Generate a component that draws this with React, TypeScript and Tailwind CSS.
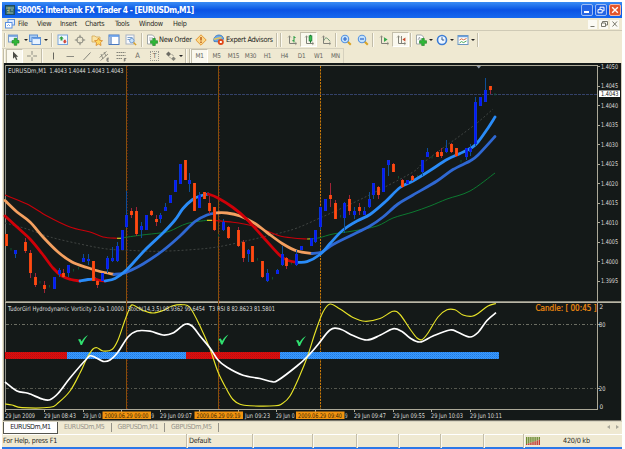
import React from "react";

type Pt = [number, number];

const FONT = "font-['DejaVu_Sans_Condensed','DejaVu_Sans',sans-serif]";
const CHART_FONT = "'DejaVu Sans Condensed','DejaVu Sans',sans-serif";

/* Catmull-Rom smoothing for the moving averages and oscillators */
function smooth(points: Pt[]): string {
  let d = `M${points[0][0]} ${points[0][1]}`;
  for (let i = 0; i < points.length - 1; i++) {
    const p0 = points[Math.max(0, i - 1)];
    const p1 = points[i];
    const p2 = points[i + 1];
    const p3 = points[Math.min(points.length - 1, i + 2)];
    d += `C${p1[0] + (p2[0] - p0[0]) / 6} ${p1[1] + (p2[1] - p0[1]) / 6} ${p2[0] - (p3[0] - p1[0]) / 6} ${p2[1] - (p3[1] - p1[1]) / 6} ${p2[0]} ${p2[1]}`;
  }
  return d;
}

type Series = { color: string; width: number; points: Pt[] };

const series: Series[] = [
  { color: "#c8000a", width: 1.1, points: [[5, 195], [27, 204], [47, 216], [70, 227], [90, 232], [103, 237], [117, 238.3]] },
  { color: "#f5f020", width: 1.1, points: [[117, 238.3], [121, 238.2]] },
  { color: "#0c7a30", width: 1, points: [[121, 238], [142, 235], [160, 233], [170, 231], [187, 223.5], [207, 220.3]] },
  { color: "#f5f020", width: 1.1, points: [[207, 220.3], [212, 220.3]] },
  { color: "#c8000a", width: 1.1, points: [[212, 220.3], [233, 222.3], [253, 226], [267, 231], [280, 236], [293, 238], [307, 239]] },
  { color: "#b0c020", width: 1.1, points: [[307, 239], [313, 238.8]] },
  { color: "#0c7a30", width: 1, points: [[313, 238.8], [320, 237.6], [333, 234], [353, 231], [377, 226], [393, 218], [413, 212], [430, 206], [447, 199], [470, 191], [495, 173]] },
  { color: "#f4a060", width: 2.8, points: [[5, 200.5], [17, 212], [30, 222], [43, 237], [58, 252], [72, 262], [87, 267.5], [100, 271.5], [114, 274.3]] },
  { color: "#2f68d2", width: 2.8, points: [[114, 274.3], [122, 273.7], [130, 270.7], [143, 264], [163, 250.5], [180, 236], [195, 221.5], [207, 215], [217, 212.8]] },
  { color: "#f4a060", width: 2.8, points: [[217, 212.8], [227, 213], [240, 216], [255, 223.5], [267, 232.5], [283, 244], [297, 251], [312, 253.5]] },
  { color: "#2f68d2", width: 2.8, points: [[312, 253.5], [322, 252], [333, 244.5], [350, 236], [370, 226], [383, 217], [398, 204], [413, 195], [437, 181], [453, 169.5], [470, 161], [478, 155], [495, 136.5]] },
  { color: "#d00008", width: 2.8, points: [[5, 216], [17, 227], [30, 239], [42, 253.5], [53, 268], [62, 276], [71, 279.5], [80, 281]] },
  { color: "#2a8cf8", width: 2.8, points: [[80, 281], [88, 279.5], [95, 279]] },
  { color: "#d00008", width: 2.8, points: [[95, 279], [100, 280.5], [105, 281]] },
  { color: "#2a8cf8", width: 2.8, points: [[105, 281], [115, 278.5], [127, 269.5], [145, 250], [163, 233], [175, 220], [183, 208.5], [192, 200], [200, 196], [208, 194]] },
  { color: "#d00008", width: 2.8, points: [[208, 194], [217, 197.5], [233, 207.5], [247, 219.5], [263, 237], [280, 255.5], [288, 260.5], [297, 262.3]] },
  { color: "#2a8cf8", width: 2.8, points: [[297, 262.3], [307, 261.7], [320, 254.5], [330, 243.5], [343, 230], [357, 221], [370, 214.5], [385, 202], [400, 187.5], [413, 181], [430, 170.5], [447, 159.5], [460, 153.5], [472, 147.5], [478, 142], [487, 129.5], [495, 117]] },
];

const trend: Pt[] = [[5, 223], [27, 229], [50, 237], [80, 244], [107, 249], [133, 250.5], [157, 251.3], [187, 250], [217, 247], [250, 240], [267, 236], [280, 233], [297, 228], [320, 218], [353, 203], [383, 188], [413, 172], [423, 163], [447, 145], [457, 138], [477, 123], [493, 109]];

const yellowLine: Pt[] = [[5, 404], [12, 405], [22, 407.6], [50, 407.3], [58, 403], [70, 391], [80, 373], [87, 358], [93, 349], [97, 347.7], [103, 351], [112, 349.5], [118, 340], [125, 320], [130, 307.5], [133, 305], [143, 310.5], [153, 313], [163, 310.5], [172, 306], [183, 304.7], [190, 307.5], [200, 326], [210, 349], [218, 372], [227, 390], [233, 399.5], [240, 404.3], [250, 405.8], [275, 405.8], [282, 403.7], [290, 396], [300, 375], [308, 355], [315, 333], [323, 312], [330, 304], [340, 309], [353, 317.5], [365, 321.3], [380, 318.5], [393, 311.3], [400, 314.5], [410, 329], [417, 338], [422, 339.7], [428, 333], [438, 317], [447, 309.8], [455, 309.8], [463, 315], [472, 316.3], [478, 313.5], [488, 306], [496, 303.5]];

const whiteLine: Pt[] = [[5, 382], [17, 391], [28, 393.3], [43, 399.3], [50, 399.7], [58, 393.5], [70, 378], [87, 358.5], [92, 356], [103, 361.3], [110, 360], [118, 352], [128, 337], [137, 331], [150, 331.2], [163, 335], [173, 333], [185, 324.3], [192, 326], [200, 336], [210, 348], [218, 360], [227, 367.3], [243, 375.3], [260, 378.5], [272, 381.7], [278, 380.3], [297, 366], [308, 356], [318, 344.5], [330, 330], [340, 329], [353, 335.5], [367, 340], [380, 335.3], [393, 328.8], [402, 331.5], [410, 338], [420, 342], [433, 336], [450, 330], [458, 332.3], [470, 337], [478, 332.5], [487, 320.5], [496, 312.7]];

/* x, body top, body bottom, wick top, wick bottom */
type Candle = [number, number, number, number, number];

const bull: Candle[] = [
  [15.3, 250, 253.5, 250, 258], [54.5, 277, 289, 277, 289], [59, 270, 274, 268, 277], [68.5, 265, 273, 265, 277], [83.5, 258, 262, 254, 262], [88.5, 259, 261, 254, 265], [102.5, 273, 281, 273, 281], [107.5, 258, 269, 256, 273], [112.5, 258, 261, 247, 262], [117, 246, 261, 242, 262], [122, 230, 250, 230, 250], [126.7, 215, 227, 191, 228], [141.5, 226, 230, 222, 238], [146.5, 215, 230, 215, 230], [160.7, 215, 218.5, 213, 223], [165.5, 207, 211, 203, 211], [170.3, 195, 203, 195, 203], [175.3, 180, 192, 180, 192], [180.3, 164, 184, 164, 184], [189.6, 180, 184, 173, 192], [199.4, 195, 208, 192, 208], [223.7, 222, 230, 219, 231], [248, 250, 254, 249, 262], [267.4, 273, 281, 269, 282], [277, 270, 273.5, 269, 274], [282, 254, 265, 246, 266], [296.4, 254, 265, 250, 266], [301.4, 246, 250, 246, 250], [311, 238, 246, 238, 246], [315.7, 230, 242, 230, 243], [320.4, 207, 227, 207, 230], [325.4, 199, 211, 199, 211], [344.8, 203, 218, 202, 233], [354.4, 211, 215, 207, 219], [364.4, 211, 215, 207, 215], [369, 199, 207, 192, 208], [373.8, 183, 195, 183, 199], [383.5, 168, 192, 168, 192], [388.4, 160, 164.5, 160, 176], [407.7, 180, 184, 180, 184], [422.4, 160, 172, 160, 176], [427.4, 152, 157, 148, 157], [446.6, 148, 152, 140, 153], [466, 148, 157, 148, 160], [470.6, 148, 152, 144, 156], [475.4, 102, 144, 97, 146], [480.3, 97, 106, 97, 106], [485.4, 90, 102, 78, 102],
];

const bear: Candle[] = [
  [6, 234, 246, 234, 246], [25, 242, 251, 238, 253], [30, 253, 273, 250, 278], [35, 277, 285, 273, 287], [44.5, 285, 289, 281, 293], [63.5, 273, 277, 269, 278], [93, 261, 281, 261, 281], [97.5, 281, 285, 280, 288], [131.5, 211, 215, 208, 218], [136.5, 211, 234, 207, 236], [151.3, 211, 215, 210, 216], [156, 219, 222, 215, 226], [185, 160, 180, 160, 180], [194.6, 183, 211, 183, 211], [204.4, 192, 199, 192, 199], [209.3, 203, 211, 196, 214], [214, 207, 230, 207, 231], [228.7, 227, 238, 226, 239], [238.3, 230, 246, 227, 247], [243.3, 242, 258, 240, 262], [252.7, 246, 262, 246, 262], [262.5, 261, 277, 261, 278], [286.5, 258, 266, 257, 269], [330.4, 195, 199, 183, 207], [335.4, 203, 219, 200, 219], [349.5, 199, 211, 195, 215], [359.3, 207, 211, 203, 215], [378.7, 187, 195, 186, 199], [393.4, 164, 172, 163, 172], [402.7, 180, 187, 179, 188], [412.4, 176, 180, 175, 181], [437, 152, 157, 151, 157], [441.6, 152, 156, 148, 158], [451.4, 144, 152, 143, 153], [456.4, 148, 156, 148, 157], [490.4, 86, 90, 86, 94],
];

const dojis: Pt[] = [[11, 248], [40, 281], [49.5, 285], [73.5, 269], [78.5, 267], [218.5, 234], [257.5, 258], [272.5, 277], [291.5, 262], [340.5, 215], [398.5, 176], [417.5, 175], [432, 156], [461, 160], [495, 93]];

function Txt(p: { x: number; y: number; w?: number; fill?: string; size?: number; children: string }) {
  return (
    <text x={p.x} y={p.y} textLength={p.w} lengthAdjust="spacingAndGlyphs" fontSize={p.size ?? 6.4} fill={p.fill ?? "#dcdcd8"} fontFamily={CHART_FONT} className="whitespace-pre">
      {p.children}
    </text>
  );
}

function Candles({ data, body, wick, edge }: { data: Candle[]; body: string; wick: string; edge: string }) {
  return (
    <g>
      {data.map(([x, t, b, wt, wb]) => {
        const l = Math.round(x - 1.5);
        return (
          <g key={x} shapeRendering="crispEdges">
            <rect x={l + 1} y={wt} width={1} height={wb - wt} fill={wick} />
            <rect x={l} y={t} width={3} height={b - t} fill={edge} />
            <rect x={l + 1} y={t} width={1} height={b - t} fill={body} />
          </g>
        );
      })}
    </g>
  );
}

function Chart() {
  const prices = ["1.4050", "1.4045", "1.4040", "1.4035", "1.4030", "1.4025", "1.4020", "1.4015", "1.4010", "1.4005", "1.4000", "1.3995"];
  const ticks = [5, 44, 83, 121, 160, 199, 238, 276, 315, 354, 393, 431, 470];
  /* x, width, text; labels covered by a separator flag show only their free part */
  const times: [number, number, string][] = [[5, 30, "29 Jun 2009"], [44, 32, "29 Jun 08:43"], [83, 18, "29 Jun 0"], [151.5, 2.5, "9"], [160, 32, "29 Jun 09:07"], [245, 25, "Jun 09:23"], [276, 18.5, "29 Jun 0"], [345, 2.5, "9"], [354, 32, "29 Jun 09:47"], [393, 32, "29 Jun 09:55"], [431, 32, "29 Jun 10:03"], [470, 32, "29 Jun 10:11"]];
  const flags: [number, string][] = [[102.5, "2009.06.29 09:00"], [194.5, "2009.06.29 09:19"], [296, "2009.06.29 09:40"]];
  return (
    <svg className="block h-[359px] w-[619px] bg-[#141918]" viewBox="3 63 619 359">
      <defs>
        <pattern id="hatchRed" width="2" height="2" patternUnits="userSpaceOnUse">
          <rect width="2" height="2" fill="#e40a0a" />
          <rect width="1" height="1" fill="#b01414" />
          <rect x="1" y="1" width="1" height="1" fill="#c81010" />
        </pattern>
        <pattern id="hatchBlue" width="2" height="2" patternUnits="userSpaceOnUse">
          <rect width="2" height="2" fill="#3c9cff" />
          <rect width="1" height="1" fill="#2078e0" />
          <rect x="1" y="1" width="1" height="1" fill="#2c88f0" />
        </pattern>
      </defs>
      {/* frames */}
      <g shapeRendering="crispEdges">
        <rect x="3" y="63" width="1" height="359" fill="#b8b4a4" />
        <rect x="5" y="65" width="593" height="1" fill="#aca998" />
        <rect x="5" y="65" width="1" height="345" fill="#8f9088" />
        <rect x="597" y="65" width="1" height="345" fill="#aca998" />
        <rect x="5" y="301" width="617" height="1" fill="#8a897c" />
        <rect x="5" y="302" width="617" height="1" fill="#b9b6a6" />
        <rect x="5" y="409" width="593" height="1" fill="#aca998" />
        <rect x="3" y="420" width="619" height="1" fill="#77756a" />
        <rect x="3" y="421" width="619" height="1" fill="#d9d5c2" />
        <rect x="621" y="63" width="1" height="359" fill="#d0ccba" />
        {prices.map((p, i) => (
          <rect key={p} x="598" y={Math.round(66 + i * 19.5)} width="2" height="1" fill="#aca998" />
        ))}
        {ticks.map((x) => (
          <rect key={x} x={x} y="410" width="1" height="2" fill="#aca998" />
        ))}
        <rect x="598" y="324" width="2" height="1" fill="#aca998" />
        <rect x="598" y="388" width="2" height="1" fill="#aca998" />
      </g>
      {/* bid line and period separators */}
      <line x1="6" x2="597" y1="94.5" y2="94.5" stroke="#34426a" strokeDasharray="3 1" />
      <line x1="6" x2="597" y1="324.5" y2="324.5" stroke="#76786c" strokeDasharray="3 2 1 2" strokeWidth="0.9" />
      <line x1="6" x2="597" y1="388.5" y2="388.5" stroke="#5e6056" strokeDasharray="3 2 1 2" strokeWidth="0.9" />
      {[126.5, 218.5].map((x) => (
        <g key={x}>
          <line x1={x} x2={x} y1="66" y2="409" stroke="#84500c" />
          <line x1={x + 1} x2={x + 1} y1="66" y2="409" stroke="#7a1a10" strokeDasharray="1 2" strokeWidth="0.8" />
        </g>
      ))}
      <line x1="320.5" x2="320.5" y1="66" y2="409" stroke="#c87808" strokeDasharray="2.2 1" />
      <path d={smooth(trend)} fill="none" stroke="#444846" strokeWidth="0.9" strokeDasharray="2 2" />
      <path d="M476.5 66h4.5l-2.2 2.6z" fill="#8d99a8" />
      {dojis.map(([x, y]) => (
        <rect key={x} x={x - 0.5} y={y} width="1" height="2.5" fill="#0c5030" />
      ))}
      {series.filter((s) => s.width < 2).map((s, i) => (
        <path key={i} d={smooth(s.points)} fill="none" stroke={s.color} strokeWidth={s.width} />
      ))}
      {series.filter((s) => s.width > 2).map((s, i) => (
        <path key={i} d={smooth(s.points)} fill="none" stroke={s.color} strokeWidth={s.width} strokeLinecap="round" />
      ))}
      <Candles data={bull} body="#0810ff" wick="#0d4f98" edge="#0a34d8" />
      <Candles data={bear} body="#ff4c10" wick="#a02438" edge="#f04412" />
      <Txt x={8} y={73} w={38.5}>EURUSDm,M1</Txt>
      <Txt x={49.5} y={73} w={74}>1.4043 1.4044 1.4043 1.4043</Txt>

      {/* indicator pane */}
      <g shapeRendering="crispEdges">
        <rect x="5" y="352" width="62" height="7" fill="url(#hatchRed)" />
        <rect x="67" y="352" width="119" height="7" fill="url(#hatchBlue)" />
        <rect x="186" y="352" width="94" height="7" fill="url(#hatchRed)" />
        <rect x="280" y="352" width="219" height="7" fill="url(#hatchBlue)" />
      </g>
      <path d={smooth(yellowLine)} fill="none" stroke="#e8e428" strokeWidth="1.15" />
      <path d={smooth(whiteLine)} fill="none" stroke="#ffffff" strokeWidth="1.7" />
      <Txt x={8} y={311} w={116}>TudorGirl Hydrodynamic Vorticity 2.0a 1.0000</Txt>
      <Txt x={128} y={311} w={77}>Stoch(14,3,5) 98.9362 99.6454</Txt>
      <Txt x={209} y={311} w={66}>T3 RSI 8 82.8623 81.5801</Txt>
      {[[78, 335], [218.5, 334.5], [296, 336]].map(([x, y]) => (
        <path key={x} transform={`translate(${x} ${y})`} d="M0 4.6L2.3 4 3.6 6.6C5.2 3.8 7.2 1.6 10 0 7.6 2.8 5.6 6 4 10H2.6C2 8 1.2 6.2 0 4.6z" fill="#30e070" />
      ))}
      <text x="535.5" y="311" fontSize="8" textLength="61" lengthAdjust="spacingAndGlyphs" fill="#f08c10" fontFamily={CHART_FONT} stroke="#f08c10" strokeWidth="0.2">
        Candle: [ 00:45 ]
      </text>
      <Txt x={599.5} y={309}>2</Txt>
      <Txt x={599} y={326.5} w={6.5}>80</Txt>
      <Txt x={599} y={390.5} w={6.5}>20</Txt>
      <Txt x={599.5} y={408.5}>0</Txt>

      {/* price scale */}
      {prices.map((p, i) => (
        <Txt key={p} x={601} y={68.6 + i * 19.5} w={17}>{p}</Txt>
      ))}
      <rect x="599" y="90.5" width="21" height="6.5" fill="#ffffff" />
      <Txt x={601} y={96} w={17.5} fill="#202020">1.4043</Txt>

      {/* time scale */}
      {times.map(([x, w, t]) => (
        <Txt key={x} x={x} y={417.6} w={w}>{t}</Txt>
      ))}
      {flags.map(([x, t]) => (
        <g key={t}>
          <rect x={x} y="411.5" width="48.5" height="7.5" fill="#f29410" />
          <Txt x={x + 2} y={417.6} w={44} fill="#3a2804">{t}</Txt>
        </g>
      ))}
    </svg>
  );
}

function Svg({ children, w = 12, h = 12 }: { children: React.ReactNode; w?: number; h?: number }) {
  return (
    <svg width={w} height={h} viewBox={`0 0 ${w} ${h}`} className="block shrink-0" fill="none">
      {children}
    </svg>
  );
}

const Plus = ({ x = 0, y = 0 }: { x?: number; y?: number }) => (
  <path transform={`translate(${x} ${y})`} d="M2.2 0h2.6v2.2H7v2.6H4.8V7H2.2V4.8H0V2.2h2.2z" fill="#30b838" stroke="#188020" strokeWidth=".6" />
);
const Caret = () => <span className="ml-[2px] border-x-[2px] border-t-[2px] border-x-transparent border-t-[#222]" />;
const Cell = ({ children, on }: { children: React.ReactNode; on?: boolean }) => (
  <div className={`flex h-[15px] w-[17px] shrink-0 items-center justify-center ${on ? "border border-[#c4bfab] border-r-white border-b-white bg-[#faf8ee]" : ""}`}>{children}</div>
);
const DropCell = ({ children }: { children: React.ReactNode }) => (
  <div className="flex w-[21px] shrink-0 items-center justify-center">{children}</div>
);
const Sep = ({ className }: { className: string }) => (
  <div className={`flex h-[14px] shrink-0 justify-center ${className}`}>
    <div className="w-px bg-[#c2bda9]" />
    <div className="w-px bg-[#fbf9f0]" />
  </div>
);

/* price and time axes shared by the chart-type icons */
const Axes = ({ children }: { children: React.ReactNode }) => (
  <Svg>
    <path d="M3.5 2v7.5h7" stroke="#808078" strokeWidth="1" />
    <path d="M2 3.6L3.5 1.6 5 3.6M9 8l2 1.5L9 11" stroke="#98968a" strokeWidth=".7" />
    {children}
  </Svg>
);

const Magnifier = ({ minus }: { minus?: boolean }) => (
  <Svg>
    <path d="M7.5 7.5l3.3 3.3" stroke="#dba425" strokeWidth="2" />
    <circle cx="5" cy="5" r="3.7" fill="#c4e2fc" stroke="#5894e0" strokeWidth="1.1" />
    <path d={minus ? "M3 5h4" : "M3 5h4M5 3v4"} stroke="#2c66c8" strokeWidth="1.2" />
  </Svg>
);

function TitleBar() {
  return (
    <div className="flex h-4 items-center bg-gradient-to-b from-[#3a8cf4] via-[#0a52e4] to-[#1668ee] pr-px pl-[3px]">
      <Svg w={10} h={10}>
        <rect x=".5" y=".5" width="9" height="9" fill="#386c70" stroke="#1c4a60" />
        <path d="M1 3h8M2 5.5h2M6 5h2M2 8h6" stroke="#8cb8b0" />
        <path d="M4 2v6" stroke="#d8b050" strokeWidth=".8" />
      </Svg>
      <span className="ml-[2px] text-[8.4px] leading-none font-bold tracking-[-0.5px] whitespace-pre text-white">58005: Interbank FX Trader 4 - [EURUSDm,M1]</span>
      <div className="ml-auto flex gap-[2px]">
        <div className="flex h-3 w-3 items-end rounded-[2px] border border-[#9cbcf4] bg-[#2464e4] pb-[2px] pl-[2px]">
          <div className="h-[2px] w-[5px] bg-white" />
        </div>
        <div className="flex h-3 w-3 items-center justify-center rounded-[2px] border border-[#9cbcf4] bg-[#2464e4]">
          <Svg w={8} h={8}>
            <path d="M3 3V1.2h4v3.6H5.5M1 3.6h4.2v3.2H1z" stroke="#fff" />
          </Svg>
        </div>
        <div className="flex h-3 w-3 items-center justify-center rounded-[2px] border border-[#f4b8a4] bg-[#e4552c]">
          <Svg w={8} h={8}>
            <path d="M1.2 1.2l5.6 5.6M6.8 1.2L1.2 6.8" stroke="#fff" strokeWidth="1.4" />
          </Svg>
        </div>
      </div>
    </div>
  );
}

function MenuBar() {
  return (
    <div className="flex h-3 items-center pr-[3px] pl-[3px] text-[7.2px] leading-none tracking-[-0.3px] text-[#2a2a26]">
      <Svg w={10} h={10}>
        <rect x="3" y=".5" width="6.5" height="5.5" fill="#dceaff" stroke="#5a90e0" />
        <rect x=".5" y="3.5" width="6.5" height="5.5" fill="#fff" stroke="#5a90e0" />
        <path d="M2 7l1.5-1.5L5 7" stroke="#5a90e0" strokeWidth=".8" />
      </Svg>
      <span className="ml-[3px] w-[19px]">File</span>
      <span className="w-[23px]">View</span>
      <span className="w-[25px]">Insert</span>
      <span className="w-[30px]">Charts</span>
      <span className="w-[24px]">Tools</span>
      <span className="w-[34px]">Window</span>
      <span>Help</span>
      <div className="ml-auto flex gap-[2px]">
        {["M1.5 6.5h4", "M2.5 3V1.5h5v3.5H6M1.5 3h4v3.5h-4z", "M1.5 1.5l4.5 5M6 1.5l-4.5 5"].map((d) => (
          <div key={d} className="flex h-[9px] w-[9px] items-center justify-center bg-[#fbfaf4]">
            <Svg w={8} h={8}>
              <path d={d} stroke="#77776c" strokeWidth="1" />
            </Svg>
          </div>
        ))}
      </div>
    </div>
  );
}

function MainToolbar() {
  return (
    <div className="flex h-[18px] items-center border-t border-[#cfcab6] text-[7.4px] leading-none tracking-[-0.32px] text-[#1e1e1c]">
      <Sep className="w-[5px]" />
      <DropCell>
        <Svg w={14}>
          <rect x=".5" y="1" width="9" height="7" fill="#e6f2ff" stroke="#7a9cc8" />
          <path d="M1 2h8" stroke="#5a90d8" strokeWidth="1.4" />
          <Plus x={4} y={4.3} />
        </Svg>
        <Caret />
      </DropCell>
      <DropCell>
        <Svg w={13}>
          <rect x=".5" y="1" width="8" height="6.5" fill="#a8ccf4" stroke="#5c90d4" />
          <rect x="3" y="3.5" width="8.5" height="7" fill="#e8f3ff" stroke="#5c90d4" />
          <path d="M3.5 4.5h8" stroke="#6ca0e8" strokeWidth="1.2" />
        </Svg>
        <Caret />
      </DropCell>
      <Sep className="w-[5px]" />
      <Cell>
        <Svg>
          <rect x="1" y="1" width="9.5" height="9.5" fill="#f2f8ff" stroke="#78a4dc" />
          <path d="M4.4 2.2l2.4 2.4H5.5v2h-2v-2H2z" fill="#30a040" />
          <path d="M7.8 9.6L5.6 7.4h1.2V5.8h2v1.6H10z" fill="#d04838" />
        </Svg>
      </Cell>
      <Cell>
        <Svg>
          <circle cx="6" cy="6" r="3.2" stroke="#88887e" strokeWidth="1" />
          <path d="M6 .8v3.4M6 7.8v3.4M.8 6h3.4M7.8 6h3.4" stroke="#88887e" strokeWidth="1" />
        </Svg>
      </Cell>
      <Cell>
        <Svg>
          <path d="M1 2h3l1 1h4v5H1z" fill="#fae4a4" stroke="#d0a048" strokeWidth=".7" />
          <path d="M7.5 4l1.2 2.4 2.8.3-2 1.9.5 2.9-2.5-1.4-2.5 1.4.5-2.9-2-1.9 2.8-.3z" fill="#ffd860" stroke="#d88828" strokeWidth=".8" />
        </Svg>
      </Cell>
      <Cell>
        <Svg>
          <rect x="1" y="1" width="10" height="9.5" fill="#fff" stroke="#4878c0" />
          <path d="M1 2h10" stroke="#5c98e8" strokeWidth="1.6" />
          <path d="M3 3v7" stroke="#4878c0" strokeWidth="1.2" />
        </Svg>
      </Cell>
      <Cell>
        <Svg>
          <rect x="1" y="1" width="8" height="9" fill="#f6f8fc" stroke="#a8b4c4" />
          <path d="M2.5 3.5h5M2.5 5.5h3" stroke="#7ba0c8" />
          <circle cx="6.8" cy="6.6" r="2.2" fill="#c8e2fa" stroke="#6c98d0" strokeWidth=".9" />
          <path d="M8.5 8.4l2.6 2.6" stroke="#d8a028" strokeWidth="1.4" />
        </Svg>
      </Cell>
      <Sep className="w-[6px]" />
      <div className="flex w-[47px] shrink-0 items-center gap-[1px] pl-[1px]">
        <Svg>
          <path d="M1.5 1h5l2 2v7h-7z" fill="#fff" stroke="#8c9498" strokeWidth=".8" />
          <path d="M3 4h4M3 6h3" stroke="#8c9498" strokeWidth=".7" />
          <Plus x={4.5} y={4.5} />
        </Svg>
        <span className="whitespace-nowrap">New Order</span>
      </div>
      <div className="flex w-[18px] shrink-0 items-center justify-center">
        <Svg>
          <path d="M6 .8L11.2 6 6 11.2.8 6z" fill="#fbd88c" stroke="#e49a38" />
          <path d="M6 3v3.4M6 7.6v1.4" stroke="#b85810" strokeWidth="1.4" />
        </Svg>
      </div>
      <div className="flex w-[65px] shrink-0 items-center gap-[1px] pl-[3px]">
        <Svg>
          <path d="M1 7.5C0 3.5 3 1 6 1s4.5 2 4.6 4.2L6.5 8z" fill="#6ca8e8" stroke="#3a74b8" strokeWidth=".8" />
          <path d="M1 5.2l7.5-1.6" stroke="#e8c858" strokeWidth="1.5" />
          <circle cx="7.8" cy="8" r="3" fill="#e04818" />
          <rect x="6.8" y="7" width="2" height="2" fill="#fff" />
        </Svg>
        <span className="tracking-[-0.36px] whitespace-nowrap">Expert Advisors</span>
      </div>
      <Sep className="w-[4px]" />
      <Sep className="w-[4px]" />
      <Cell>
        <Axes>
          <path d="M8 2v6.4M6.4 6.6H8M8 3.5h1.6" stroke="#38a04c" strokeWidth="1.1" />
        </Axes>
      </Cell>
      <Cell on>
        <Axes>
          <path d="M7.5 .8v8" stroke="#187030" />
          <rect x="6.1" y="1.8" width="2.8" height="5.2" fill="#38c050" stroke="#187030" strokeWidth=".7" />
        </Axes>
      </Cell>
      <Cell>
        <Axes>
          <path d="M4 6.5c1.6-4 3-3 6 .8" stroke="#6b9872" strokeWidth="1" />
        </Axes>
      </Cell>
      <Sep className="w-[3px]" />
      <Cell><Magnifier /></Cell>
      <Cell><Magnifier minus /></Cell>
      <Sep className="w-[4px]" />
      <Cell>
        <Axes>
          <path d="M6 3.2l3.6 2.4L6 8z" fill="#38a84c" />
        </Axes>
      </Cell>
      <Cell on>
        <Axes>
          <path d="M6.5 2v7" stroke="#88887e" />
          <path d="M10.4 3.4L7.4 5.5l3 2.1z" fill="#c84828" />
        </Axes>
      </Cell>
      <Sep className="w-[4px]" />
      <DropCell>
        <Svg>
          <path d="M1.5 1h5l2 2v7h-7z" fill="#fff" stroke="#8c9498" strokeWidth=".8" />
          <path d="M3 6l1.5-3 1 4" stroke="#8c9498" strokeWidth=".7" />
          <Plus x={4.5} y={4.5} />
        </Svg>
        <Caret />
      </DropCell>
      <DropCell>
        <Svg>
          <circle cx="6" cy="6" r="4.5" fill="#eef6ff" stroke="#3c7cd4" strokeWidth="1.6" />
          <path d="M6 3.2V6h2.2" stroke="#30588c" />
        </Svg>
        <Caret />
      </DropCell>
      <DropCell>
        <Svg>
          <rect x="1" y="1.5" width="10" height="9" fill="#fff" stroke="#6a94c0" />
          <path d="M1 2.5h10" stroke="#6ca0dc" strokeWidth="1.5" />
          <path d="M2.5 6l2-1.2 2 1 3-1.3" stroke="#d06030" strokeWidth=".9" />
          <path d="M2.5 9l2-1.4 2 1 3-1.6" stroke="#38a048" strokeWidth=".9" />
        </Svg>
        <Caret />
      </DropCell>
      <Sep className="w-[3px]" />
    </div>
  );
}

function DrawingToolbar() {
  return (
    <div className="flex h-[15px] items-center">
      <div className="flex h-[15px] w-[342px] items-center border-t border-r border-[#d6d1be] text-[6.4px] leading-none tracking-[-0.2px] text-[#66665e]">
        <Sep className="w-[4px]" />
        <Cell on>
          <Svg>
            <path d="M4 1.5v7.2l1.8-1.6 1.3 3 1.3-.6-1.3-2.8h2.2z" fill="#4c4c46" />
          </Svg>
        </Cell>
        <Cell>
          <Svg>
            <path d="M6 1v3.8M6 7.2V11M1 6h3.8M7.2 6H11" stroke="#8c8c82" />
          </Svg>
        </Cell>
        <Sep className="w-[4px]" />
        <Cell><Svg><path d="M6.5 2.5v7" stroke="#66665e" /></Svg></Cell>
        <Cell><Svg><path d="M2.5 6.5h7.5" stroke="#8c8c82" /></Svg></Cell>
        <Cell><Svg><path d="M2.5 10l7-7.5" stroke="#84847a" /></Svg></Cell>
        <Cell>
          <Svg>
            <path d="M1.5 7.5l7-6M2.5 10.5l7.5-6.5M3 4l2 5M6 2l2 4" stroke="#7c7c72" strokeWidth=".8" />
            <path d="M11 8.2H9v3h2M9 9.7h1.6" stroke="#555" strokeWidth=".7" />
          </Svg>
        </Cell>
        <Cell>
          <Svg>
            <path d="M1.5 2.5h9M1.5 5.5h9M1.5 8.5h6" stroke="#84847a" strokeDasharray="1.5 .5" />
            <path d="M9.3 11.5v-3h2M9.3 10h1.6" stroke="#555" strokeWidth=".7" />
          </Svg>
        </Cell>
        <Cell><span className="text-[7.5px]">A</span></Cell>
        <Cell>
          <div className="flex h-[10px] w-[9px] items-center justify-center border border-dotted border-[#9a9a90] text-[7px]">T</div>
        </Cell>
        <DropCell>
          <Svg>
            <path d="M3.5 1.5L6 4 3.5 6.5 1 4z" fill="#6c6c64" />
            <path d="M4 6.5l2 2M6.5 4l2 2" stroke="#84847a" strokeWidth=".8" />
            <path d="M8.5 6.4L10.8 8.7 8.5 11 6.2 8.7z" fill="#84847a" />
          </Svg>
          <Caret />
        </DropCell>
        <Sep className="w-[4px]" />
        <Sep className="w-[3px]" />
        <Cell on>M1</Cell>
        {["M5", "M15", "M30", "H1", "H4", "D1", "W1", "MN"].map((t) => (
          <Cell key={t}>{t}</Cell>
        ))}
      </div>
    </div>
  );
}

function Tabs() {
  return (
    <div className="flex h-[13px] items-start border-b border-white text-[7px] leading-none tracking-[-0.34px] text-[#96948a]">
      <div className="flex h-[12px] w-[55px] items-center justify-center border-r border-b border-l border-[#55554e] bg-white text-[#22221f]">EURUSDm,M1</div>
      {["EURUSDm,M5", "GBPUSDm,M1", "GBPUSDm,M5"].map((t) => (
        <div key={t} className="mt-[1px] flex h-[9px] w-[53.5px] items-center justify-center border-r border-[#96948a]">{t}</div>
      ))}
      <div className="mt-[3px] mr-[3px] ml-auto flex gap-[6px]">
        <span className="border-y-[2.5px] border-r-[3px] border-y-transparent border-r-[#a8a698]" />
        <span className="border-y-[2.5px] border-l-[3px] border-y-transparent border-l-[#a8a698]" />
      </div>
    </div>
  );
}

function StatusBar() {
  const bars = [0, 1, 2, 3, 4, 5, 6];
  return (
    <div className="flex h-3 items-center text-[7.2px] leading-none tracking-[-0.22px] text-[#2a2a26]">
      <span className="w-[182px] whitespace-nowrap">For Help, press F1</span>
      <Sep className="w-[3px]" />
      <span className="w-[60px] pl-px">Default</span>
      <Sep className="w-[9px]" />
      <Sep className="ml-[51px] w-[9px]" />
      <Sep className="ml-[35px] w-[9px]" />
      <Sep className="ml-[33px] w-[9px]" />
      <Sep className="ml-[33px] w-[9px]" />
      <Sep className="ml-[34px] w-[9px]" />
      <Sep className="ml-[33px] w-[5px]" />
      <Svg w={15} h={8}>
        {bars.map((i) => (
          <g key={i}>
            <rect x={i * 2.1} y="0" width="1.4" height={7 - i * 0.7} fill="#6c8c34" />
            <rect x={i * 2.1} y={7 - i * 0.7} width="1.4" height={1 + i * 0.7} fill="#c03830" />
          </g>
        ))}
      </Svg>
      <span className="ml-[22px] whitespace-nowrap">420/0 kb</span>
    </div>
  );
}

export default function App() {
  return (
    <div className={`h-[449px] w-[625px] overflow-hidden bg-white pt-[2px] ${FONT}`}>
      <div className="ml-[2px] flex w-[620px] flex-col bg-[#efe9d2]">
        <TitleBar />
        <MenuBar />
        <MainToolbar />
        <DrawingToolbar />
        <div className="pl-px">
          <Chart />
          <Tabs />
          <StatusBar />
        </div>
      </div>
      <div className="ml-[2px] h-[3px] w-[620px] bg-[#2c78e8]" />
    </div>
  );
}
